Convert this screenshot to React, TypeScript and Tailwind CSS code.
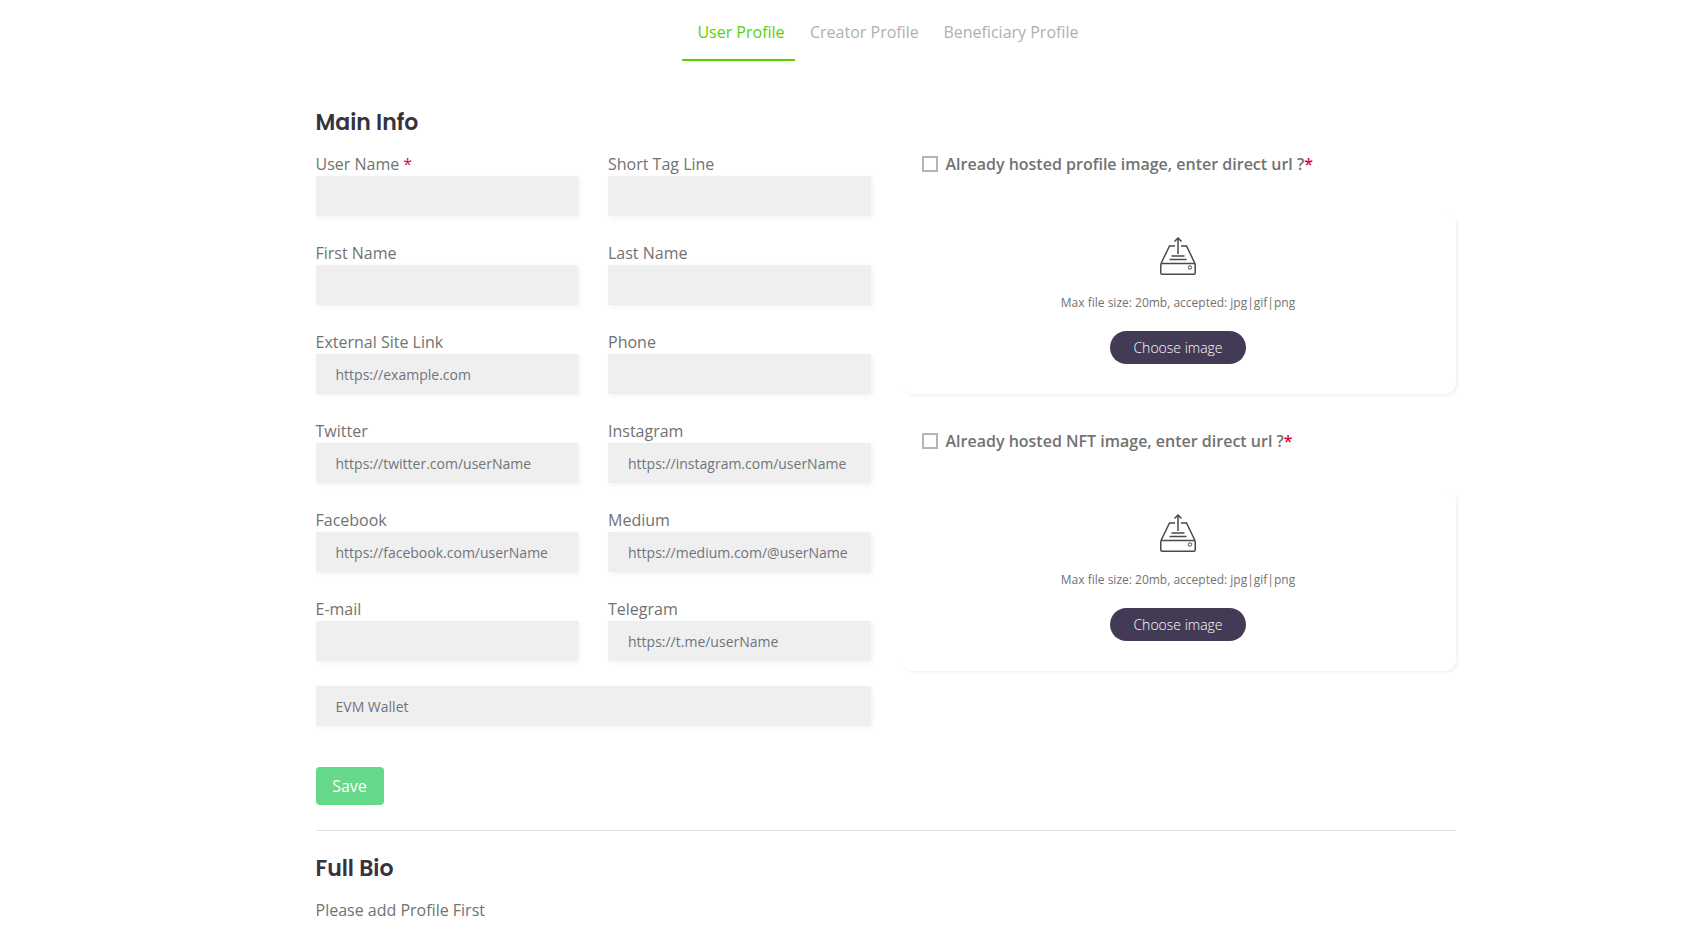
import React from "react";

const fields = [
  { label: "User Name", required: true, placeholder: "" },
  { label: "Short Tag Line", placeholder: "" },
  { label: "First Name", placeholder: "" },
  { label: "Last Name", placeholder: "" },
  { label: "External Site Link", placeholder: "https://example.com" },
  { label: "Phone", placeholder: "" },
  { label: "Twitter", placeholder: "https://twitter.com/userName" },
  { label: "Instagram", placeholder: "https://instagram.com/userName" },
  { label: "Facebook", placeholder: "https://facebook.com/userName" },
  { label: "Medium", placeholder: "https://medium.com/@userName" },
  { label: "E-mail", placeholder: "" },
  { label: "Telegram", placeholder: "https://t.me/userName" },
];

const inputClass =
  "block h-10 w-full bg-[#efefef] px-5 text-sm text-[#6c757d] shadow-[2px_2px_5px_rgba(0,0,0,0.05)] outline-none placeholder:text-[#70747c]";

function Heading({ children }: { children: React.ReactNode }) {
  return (
    <h2 className="font-['Poppins','Inter',sans-serif] text-[22px] leading-[26px] font-semibold text-[#35343e]">
      {children}
    </h2>
  );
}

function UploadIcon() {
  return (
    <svg width="36" height="38" viewBox="0 0 36 38" fill="none" stroke="#4a4a4a" strokeWidth="1.5">
      <rect x="0.75" y="26.5" width="34.5" height="10.75" rx="1.5" />
      <path d="M1 26.5 9.5 9H15M21 9h5.500L35 26.500M18 17V1.500M14.500 4.500 18 1l3.500 3.500M11.500 19h13M9.500 22.500h17" />
      <circle cx="30" cy="30.500" r="1.700" strokeWidth="1" />
    </svg>
  );
}

function UploadBlock({ label }: { label: string }) {
  return (
    <section>
      <label className="flex h-6 items-center pl-[21.5px] text-base font-semibold text-[#727272]">
        <span className="mr-[7.5px] size-4 border-2 border-[#b5b5b8]" />
        {label}
        <span className="text-[#e4003c]">*</span>
      </label>
      <div className="mt-[35px] flex h-[183px] flex-col items-center rounded-xl bg-white pt-[26px] shadow-[2px_2px_3px_rgba(0,0,0,0.05)]">
        <UploadIcon />
        <p className="mt-[19px] text-xs leading-[18px] text-[#727272]">Max file size: 20mb, accepted: jpg|gif|png</p>
        <button className="mt-[19px] h-[33px] w-[136px] rounded-full bg-[#433a56] text-sm font-light text-white">
          Choose image
        </button>
      </div>
    </section>
  );
}

export default function App() {
  return (
    <div className="h-[929px] overflow-hidden bg-white font-['Open_Sans',sans-serif] text-base leading-6 text-[#727272]">
      <nav className="flex h-[61px] pl-[681.6px] text-[#b0b0b0]">
        <a className="w-[113px] border-b-2 border-[#55d400] pt-5 pl-[15.8px] text-[#55d400]">User Profile</a>
        <a className="w-[134px] pt-5 pl-[15.4px]">Creator Profile</a>
        <a className="pt-5 pl-[14.8px]">Beneficiary Profile</a>
      </nav>
      <main className="ml-[315.5px] w-[1140px] pt-[49px]">
        <Heading>Main Info</Heading>
        <div className="mt-4 flex">
          <div className="w-[555.5px]">
            <div className="grid grid-cols-[262.5px_263px] gap-x-[30px] gap-y-[25px]">
              {fields.map((f) => (
                <label key={f.label} className="block h-16">
                  <span className="block h-6">
                    {f.label}
                    {f.required && <span className="text-[#e4003c]"> *</span>}
                  </span>
                  <input className={inputClass} placeholder={f.placeholder} />
                </label>
              ))}
              <input className={`${inputClass} col-span-2`} placeholder="EVM Wallet" />
            </div>
            <button className="mt-[41px] block h-[38px] w-[68px] rounded bg-[#65d989] text-white">Save</button>
          </div>
          <div className="ml-[29.5px] flex flex-1 flex-col gap-[35px]">
            <UploadBlock label="Already hosted profile image, enter direct url ?" />
            <UploadBlock label="Already hosted NFT image, enter direct url ?" />
          </div>
        </div>
        <hr className="mt-[25px] mb-[25px] border-[#e3e3e3]" />
        <Heading>Full Bio</Heading>
        <p className="mt-4">Please add Profile First</p>
      </main>
    </div>
  );
}
